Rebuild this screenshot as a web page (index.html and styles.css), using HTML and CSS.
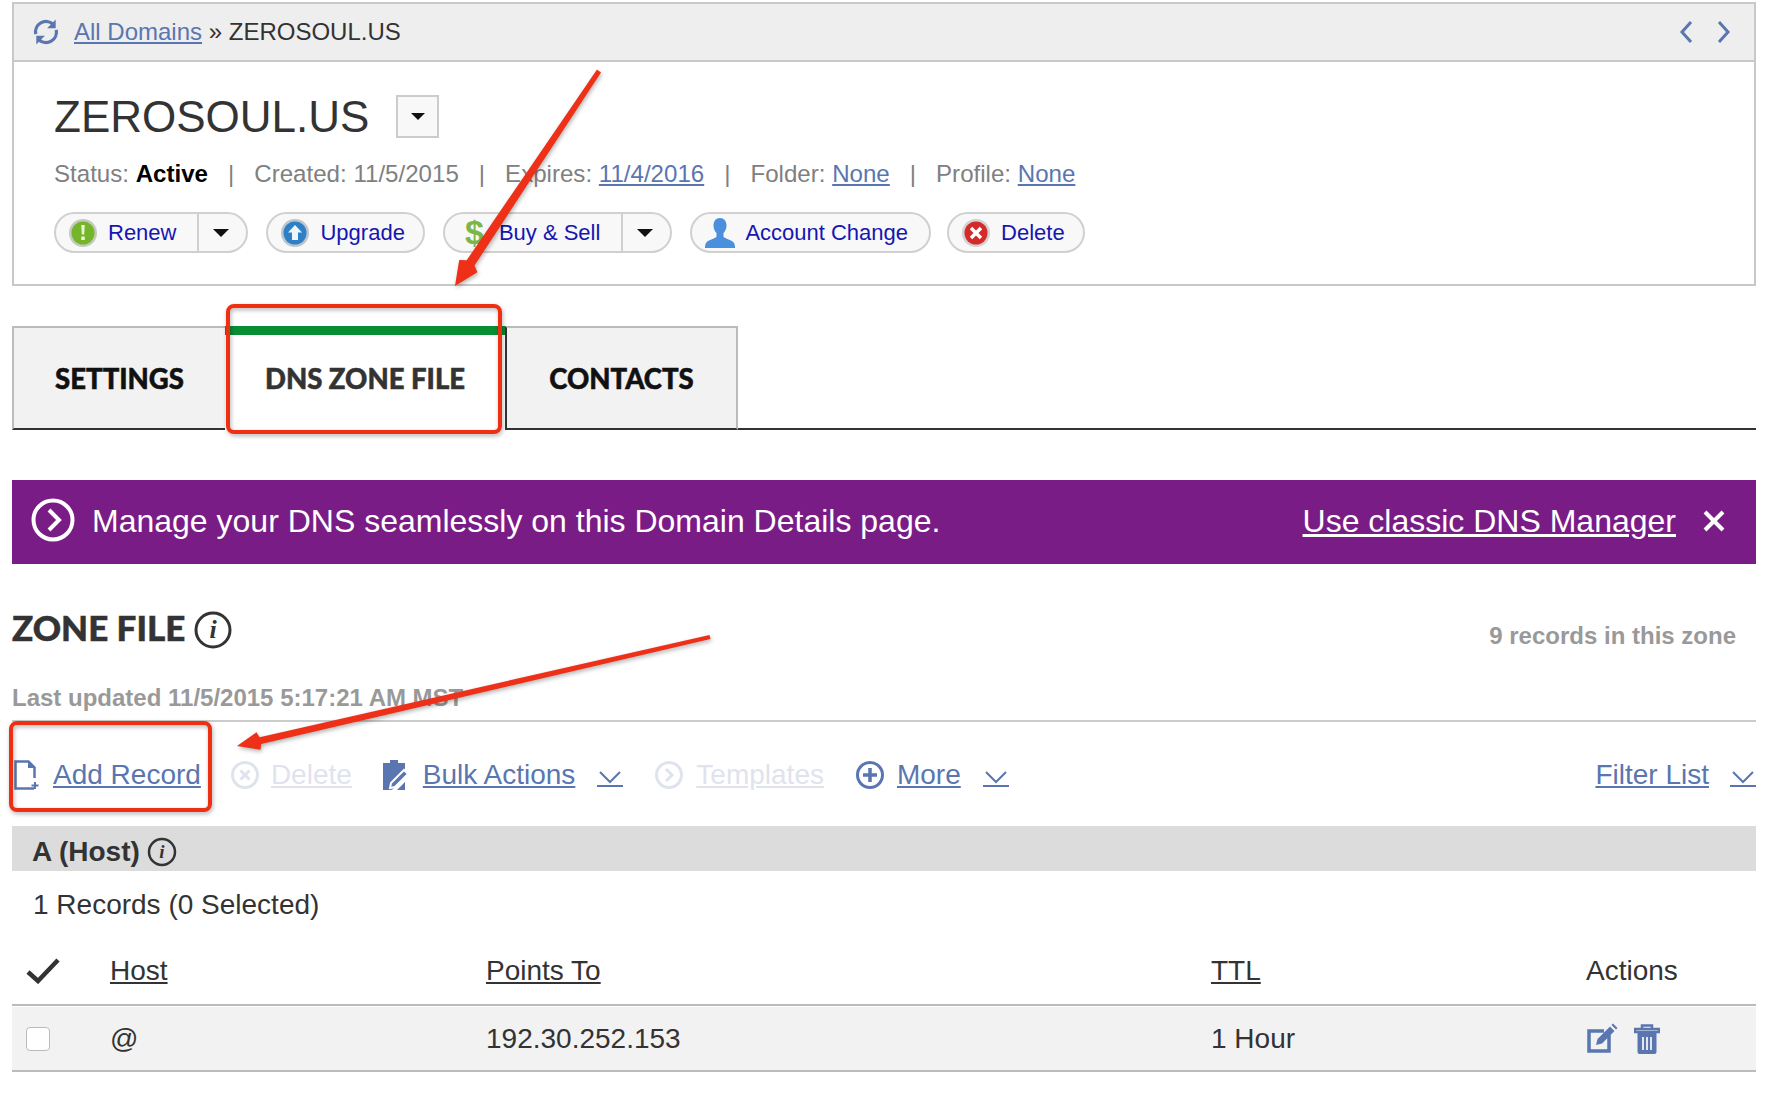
FILE: index.html
```html
<!DOCTYPE html>
<html lang="en">
<head>
    <meta charset="UTF-8">
    <title>ZEROSOUL.US</title>
    <link rel="stylesheet" href="styles.css">
</head>
<body>
<div class="panel">
    <div class="crumbs">
        <svg class="refresh" width="28" height="28" viewBox="0 0 26 26"><path d="M3.500 15a9.800 9.800 0 0 1 16-9.400M22.500 11a9.800 9.800 0 0 1-16 9.400" fill="none" stroke="#5a76b0" stroke-width="3"/><path d="M22 1.500V9.500h-8zM4 24.500V16.500h8z" fill="#5a76b0"/></svg>
        <a class="link" href="#">All Domains</a><span class="trail">&nbsp;» ZEROSOUL.US</span>
        <span class="pager">
            <svg width="14" height="24" viewBox="0 0 14 24"><path d="M12 2 3 12l9 10" fill="none" stroke="#5a76b0" stroke-width="3"/></svg>
            <svg width="14" height="24" viewBox="0 0 14 24"><path d="m2 2 9 10-9 10" fill="none" stroke="#5a76b0" stroke-width="3"/></svg>
        </span>
    </div>
    <div class="panel-body">
        <div class="title-row">
            <h1>ZEROSOUL.US</h1>
            <span class="title-drop"><i class="caret small"></i></span>
        </div>
        <div class="meta">
            <span>Status: <b>Active</b></span><em>|</em>
            <span>Created: 11/5/2015</span><em>|</em>
            <span>Expires: <a class="link" href="#">11/4/2016</a></span><em>|</em>
            <span>Folder: <a class="link" href="#">None</a></span><em>|</em>
            <span>Profile: <a class="link" href="#">None</a></span>
        </div>
        <div class="buttons">
            <div class="pill renew">
                <span class="pill-main">
                    <svg width="30" height="30" viewBox="0 0 30 30"><circle cx="15" cy="15" r="14" fill="#c4cac0"/><circle cx="15" cy="15" r="11.500" fill="#74b52a"/><path d="M13.200 7h3.600l-.6 9.500h-2.400zM13.200 18.500h3.600v3.500h-3.600z" fill="#e8f5d0"/></svg>
                    Renew
                </span>
                <span class="pill-drop"><i class="caret"></i></span>
            </div>
            <div class="pill upgrade">
                <span class="pill-main">
                    <svg width="30" height="30" viewBox="0 0 30 30"><circle cx="15" cy="15" r="14" fill="#bcc4cc"/><circle cx="15" cy="15" r="11.500" fill="#2f7fc6"/><path d="m15 7 7 7.500h-4V22h-6v-7.500H8z" fill="#eef6fc"/></svg>
                    Upgrade
                </span>
            </div>
            <div class="pill sell">
                <span class="pill-main"><span class="dollar">$</span>Buy &amp; Sell</span>
                <span class="pill-drop"><i class="caret"></i></span>
            </div>
            <div class="pill account">
                <span class="pill-main">
                    <svg width="32" height="32" viewBox="0 0 32 32"><path d="M16 1c4 0 6.500 3 6.500 7.500 0 3.500-1.500 6-3 7.500v3.500c0 2 8.500 3 10.500 6.500 1 1.500 1 4 1 5H1c0-1 0-3.500 1-5C4 22.500 12.500 21.500 12.500 19.500V16c-1.500-1.500-3-4-3-7.500C9.500 4 12 1 16 1z" fill="#4a90dc"/></svg>
                    Account Change
                </span>
            </div>
            <div class="pill remove">
                <span class="pill-main">
                    <svg width="30" height="30" viewBox="0 0 30 30"><circle cx="15" cy="15" r="14" fill="#d4d0d0"/><circle cx="15" cy="15" r="11.500" fill="#d42a2a"/><path d="m10 10 10 10m0-10L10 20" stroke="#fff" stroke-width="3.500"/></svg>
                    Delete
                </span>
            </div>
        </div>
    </div>
</div>

<ul class="tabs">
    <li>SETTINGS</li>
    <li class="selected">DNS ZONE FILE</li>
    <li>CONTACTS</li>
</ul>

<div class="banner">
    <svg class="banner-icon" width="44" height="44" viewBox="0 0 44 44"><circle cx="22" cy="22" r="19.500" fill="none" stroke="#fff" stroke-width="4"/><path d="m18 12 10 10-10 10" fill="none" stroke="#fff" stroke-width="4"/></svg>
    <span class="banner-text">Manage your DNS seamlessly on this Domain Details page.</span>
    <a class="banner-link" href="#">Use classic DNS Manager</a>
    <svg class="banner-close" width="24" height="24" viewBox="0 0 24 24"><path d="m3 3 18 18M21 3 3 21" stroke="#fff" stroke-width="4"/></svg>
</div>

<div class="zone-head">
    <h2>ZONE FILE</h2>
    <svg width="38" height="38" viewBox="0 0 38 38"><circle cx="19" cy="19" r="17" fill="none" stroke="#333" stroke-width="3"/><text x="19" y="27" text-anchor="middle" class="info-i" font-size="26">i</text></svg>
    <span class="zone-count">9 records in this zone</span>
</div>
<div class="updated">Last updated 11/5/2015 5:17:21 AM MST</div>

<div class="toolbar">
    <svg class="tb-add" width="26" height="30" viewBox="0 0 26 30"><path d="M20 28.500H1.500V1.500h13l6 6V18" fill="none" stroke="#5a76b0" stroke-width="2.500"/><path d="M14 1.500v6.500h7z" fill="#5a76b0"/><path d="M21 22v7M17.500 25.500h7" stroke="#5a76b0" stroke-width="2"/></svg>
    <a class="link" href="#">Add Record</a>
    <svg class="tb-del" width="28" height="28" viewBox="0 0 28 28"><circle cx="14" cy="14" r="12.500" fill="none" stroke="#dfe3ee" stroke-width="3"/><path d="m9.500 9.500 9 9m0-9-9 9" stroke="#dfe3ee" stroke-width="3"/></svg>
    <a class="link off" href="#">Delete</a>
    <svg class="tb-bulk" width="28" height="32" viewBox="0 0 28 32"><path d="M1 4h7V1h8v3h7v12L11 30l-2 1H1z" fill="#5a76b0"/><path d="M23 31h-8l8-8z" fill="#5a76b0"/><path d="m22 11 4 4-13 13-5 1 1-5z" fill="#5a76b0" stroke="#fff" stroke-width="2"/></svg>
    <a class="link" href="#">Bulk Actions</a>
    <svg class="chev" width="26" height="18" viewBox="0 0 26 18"><path d="m3 3 10 10L23 3" fill="none" stroke="#5a76b0" stroke-width="2"/><path d="M0 17h26" stroke="#5a76b0" stroke-width="2"/></svg>
    <svg class="tb-tpl" width="28" height="28" viewBox="0 0 28 28"><circle cx="14" cy="14" r="12.500" fill="none" stroke="#dfe3ee" stroke-width="3"/><path d="m11 8 6 6-6 6" fill="none" stroke="#dfe3ee" stroke-width="3"/></svg>
    <a class="link off" href="#">Templates</a>
    <svg class="tb-more" width="28" height="28" viewBox="0 0 28 28"><circle cx="14" cy="14" r="12.500" fill="none" stroke="#5a76b0" stroke-width="3"/><path d="M14 7v14M7 14h14" stroke="#5a76b0" stroke-width="3.500"/></svg>
    <a class="link" href="#">More</a>
    <svg class="chev" width="26" height="18" viewBox="0 0 26 18"><path d="m3 3 10 10L23 3" fill="none" stroke="#5a76b0" stroke-width="2"/><path d="M0 17h26" stroke="#5a76b0" stroke-width="2"/></svg>
    <a class="link filter" href="#">Filter List</a>
    <svg class="chev" width="26" height="18" viewBox="0 0 26 18"><path d="m3 3 10 10L23 3" fill="none" stroke="#5a76b0" stroke-width="2"/><path d="M0 17h26" stroke="#5a76b0" stroke-width="2"/></svg>
</div>

<div class="group">
    <b>A (Host)</b>
    <svg width="30" height="30" viewBox="0 0 30 30"><circle cx="15" cy="15" r="13" fill="none" stroke="#333" stroke-width="2.500"/><text x="15" y="21" text-anchor="middle" class="info-i" font-size="19">i</text></svg>
</div>
<div class="count">1 Records (0 Selected)</div>

<div class="row head">
    <span><svg width="34" height="26" viewBox="0 0 34 26"><path d="m2 14 10 9L32 2" fill="none" stroke="#333" stroke-width="4.500"/></svg></span>
    <span><u>Host</u></span>
    <span><u>Points To</u></span>
    <span><u>TTL</u></span>
    <span>Actions</span>
</div>
<div class="row record">
    <span><i class="check"></i></span>
    <span>@</span>
    <span>192.30.252.153</span>
    <span>1 Hour</span>
    <span class="actions">
        <svg width="32" height="32" viewBox="0 0 32 32"><path d="M23 12v16H3V8h15" fill="none" stroke="#5a76b0" stroke-width="3.500"/><path d="M10 22l1.500-6L24 3.500l4.500 4.500L16 20.500zM25.500 2l1.500-1.500 4.500 4.500L30 6.500z" fill="#5a76b0"/></svg>
        <svg width="26" height="32" viewBox="0 0 26 32"><path d="M1 6h24v3H1zM8 6V2.500h10V6" fill="none" stroke="#5a76b0" stroke-width="2.500"/><path d="M3.500 10h19v19a2 2 0 0 1-2 2h-15a2 2 0 0 1-2-2z" fill="#5a76b0"/><path d="M9 14v13M13 14v13M17 14v13" stroke="#f2f2f2" stroke-width="1.800"/></svg>
    </span>
</div>

<!-- red markup drawn over the page -->
<svg class="markup" width="1766" height="1102" viewBox="0 0 1766 1102">
    <rect x="228" y="306" width="272" height="126" rx="6"/>
    <rect x="11" y="723" width="199" height="87" rx="6"/>
    <polygon points="601,72.500 474.500,265.500 477.400,272.200 455,286 459.200,260 466.700,260.200 597,69.500"/>
    <polygon points="710.500,639 261.200,744 260.500,749.800 237,746 256.500,732.200 259.600,737.200 709.500,635"/>
</svg>
</body>
</html>
```

FILE: styles.css
```css
*{
    margin: 0;
    padding: 0;
    box-sizing: border-box;
}
body{
    position: relative;
    width: 1766px;
    height: 1102px;
    padding: 2px 10px 0 12px;
    overflow: hidden;
    background: #fff;
    color: #333;
    font-family: "Liberation Sans", Arial, sans-serif;
    font-size: 24px;
}
svg{
    flex: none;
    display: block;
}
li{
    list-style: none;
}
.link{
    color: #5a76b0;
    text-decoration: underline;
}
.link.off{
    color: #dfe3ee;
}

.panel{
    height: 284px;
    border: 2px solid #c8c8c8;
}
.crumbs{
    display: flex;
    align-items: center;
    height: 58px;
    padding-left: 18px;
    background: #eee;
    border-bottom: 2px solid #c8c8c8;
}
.refresh{
    margin-right: 14px;
}
.trail{
    color: #333;
}
.pager{
    display: flex;
    gap: 24px;
    margin-left: auto;
    margin-right: 23px;
}
.panel-body{
    padding: 33px 0 0 40px;
}
.title-row{
    display: flex;
    align-items: center;
    height: 43px;
}
h1{
    font-size: 44px;
    font-weight: normal;
    color: #333;
}
.title-drop{
    display: flex;
    align-items: center;
    justify-content: center;
    width: 43px;
    height: 43px;
    margin-left: 27px;
    border: 2px solid #ccc;
    background: #f8f8f8;
}
.caret{
    display: block;
    width: 0;
    height: 0;
    border-top: 8px solid #111;
    border-left: 8px solid transparent;
    border-right: 8px solid transparent;
}
.caret.small{
    border-top-width: 7px;
    border-left-width: 7px;
    border-right-width: 7px;
}
.meta{
    display: flex;
    align-items: center;
    height: 28px;
    margin-top: 22px;
    color: #808080;
    font-size: 24.1px;
}
.meta b{
    color: #000;
}
.meta em{
    font-style: normal;
    margin: 0 20px;
}
.buttons{
    display: flex;
    gap: 18px;
    margin-top: 24px;
}
.pill{
    display: flex;
    align-items: center;
    height: 41px;
    border: 2px solid #d0d0d0;
    border-radius: 21px;
    background: #f8f8f8;
    color: #1616b0;
    font-size: 22px;
}
.pill-main{
    display: flex;
    align-items: center;
    gap: 10px;
    height: 100%;
    padding: 0 18px 0 12px;
}
.renew .pill-main,
.sell .pill-main{
    padding-right: 21px;
}
.pill-drop{
    display: flex;
    align-items: center;
    justify-content: center;
    width: 49px;
    height: 100%;
    border-left: 2px solid #d0d0d0;
    padding-right: 4px;
}
.sell .pill-main{
    gap: 8px;
}
.dollar{
    width: 34px;
    padding-left: 8px;
    color: #7ab648;
    font-size: 34px;
    font-weight: bold;
}
.account .pill-main{
    gap: 9px;
    padding-right: 21px;
}
.remove{
    margin-left: -2px;
}

.tabs{
    display: flex;
    height: 104px;
    margin-top: 40px;
    border-bottom: 2px solid #333;
    font-family: Lato, sans-serif;
    font-size: 27.5px;
    font-weight: 900;
    -webkit-text-stroke: .5px;
    color: #111;
}
.tabs li{
    display: flex;
    align-items: center;
    justify-content: center;
    height: 104px;
    background: #f2f2f2;
    border: 2px solid #bbb;
    border-bottom: 2px solid #333;
}
.tabs li:nth-child(1){
    width: 213px;
    border-right: 0;
}
.tabs li:nth-child(2){
    width: 280px;
    padding-bottom: 9px;
    background: #fff;
    border: 0;
    border-top: 9px solid #078d32;
    border-bottom: 0;
    color: #333;
}
.tabs li:nth-child(3){
    width: 233px;
    border-left: 2px solid #333;
}

.banner{
    display: flex;
    align-items: center;
    height: 84px;
    margin-top: 50px;
    padding: 0 30px 2px 19px;
    background: #7a1c86;
    color: #fff;
    font-size: 32px;
}
.banner-icon{
    margin-top: -3px;
}
.banner-text{
    margin-left: 17px;
}
.banner-link{
    margin-left: auto;
    color: #fff;
    text-decoration: underline;
}
.banner-close{
    margin-left: 26px;
}

.zone-head{
    display: flex;
    align-items: center;
    height: 40px;
    margin-top: 44px;
}
h2{
    margin-top: -2px;
    font-family: Lato, sans-serif;
    font-size: 35px;
    font-weight: 900;
    -webkit-text-stroke: .5px;
    color: #333;
}
.zone-head svg{
    margin: 4px 0 0 9px;
}
.info-i{
    font-family: "Liberation Serif", serif;
    font-style: italic;
    font-weight: bold;
    fill: #333;
}
.zone-count{
    margin-left: auto;
    margin-right: 20px;
    padding-top: 15px;
    color: #999;
    font-weight: bold;
    font-size: 24px;
}
.updated{
    height: 30px;
    margin-top: 35px;
    color: #999;
    font-weight: bold;
    line-height: 30px;
}

.toolbar{
    display: flex;
    align-items: center;
    height: 106px;
    margin-top: 7px;
    padding: 2px 0 0 2px;
    border-top: 2px solid #ccc;
    font-size: 28px;
}
.toolbar svg{
    margin-right: 13px;
}
.toolbar .chev{
    margin: 5px 0 0 22px;
}
.toolbar .tb-del{
    margin-left: 30px;
    margin-right: 12px;
}
.toolbar .tb-bulk{
    margin-left: 30px;
}
.toolbar .tb-tpl{
    margin-left: 32px;
    margin-right: 13px;
}
.toolbar .tb-more{
    margin-left: 32px;
}
.filter{
    margin-left: auto;
}
.toolbar svg:last-child{
    margin-left: 21px;
    margin-right: 0;
}

.group{
    display: flex;
    align-items: center;
    gap: 7px;
    height: 45px;
    padding: 6px 0 0 20px;
    background: #dcdcdc;
    font-size: 28px;
}
.count{
    height: 66px;
    padding-left: 21px;
    font-size: 28px;
    line-height: 68px;
}

.row{
    display: grid;
    grid-template-columns: 98px 376px 725px 375px 1fr;
    align-items: center;
    font-size: 28px;
}
.row > span:first-child{
    padding-left: 14px;
}
.head{
    height: 69px;
    border-bottom: 2px solid #bbb;
}
.record{
    height: 65px;
    margin-top: 1px;
    background: #f2f2f2;
    border-bottom: 2px solid #bbb;
}
.check{
    display: block;
    width: 24px;
    height: 24px;
    border: 1px solid #bbb;
    border-radius: 4px;
    background: #fff;
}
.actions{
    display: flex;
    gap: 16px;
}
.markup{
    position: absolute;
    left: 0;
    top: 0;
    filter: drop-shadow(1px 2px 2px rgba(0,0,0,.3));
}
.markup rect{
    fill: none;
    stroke: #ef2f12;
    stroke-width: 4;
}
.markup polygon{
    fill: #ee3018;
}
```
